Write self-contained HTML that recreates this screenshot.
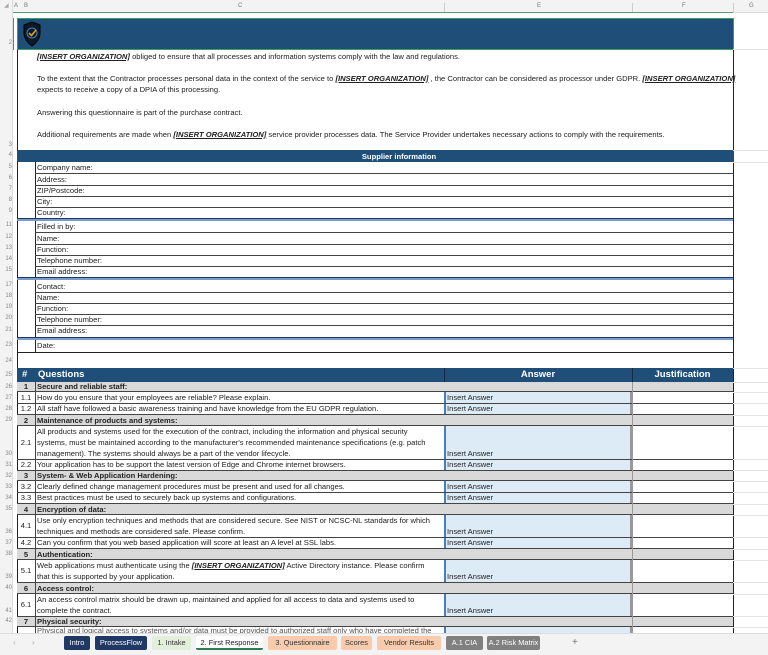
<!DOCTYPE html>
<html><head><meta charset="utf-8"><style>
*{margin:0;padding:0;box-sizing:border-box}
body{width:768px;height:655px;overflow:hidden;background:#fff;font-family:"Liberation Sans",sans-serif;font-size:7.6px;color:#222;position:relative}
.a{position:absolute}
.rn{position:absolute;left:0;width:13px;text-align:right;font-size:6px;color:#888;padding-right:1px}
.g{position:absolute;left:733px;width:35px;height:1px;background:#e4e4e4}
.t{position:absolute;white-space:nowrap;line-height:11px}
.io{font-weight:bold;font-style:italic;text-decoration:underline}
.tab{position:absolute;top:636px;height:14px;line-height:14px;font-size:7.4px;text-align:center;border-radius:2px;white-space:nowrap;overflow:hidden}
</style></head><body>
<div class="a" style="left:0;top:0;width:768px;height:13px;background:#f3f3f3;border-bottom:1px solid #ddd"></div>
<div class="a" style="left:13px;top:0;width:720px;height:13px;border-bottom:1px solid #5a9e72"></div>
<div class="a" style="left:0;top:0;width:13px;height:655px;background:#f3f3f3;border-right:1px solid #ddd"></div>
<div class="t" style="left:4px;top:1px;color:#aaa;font-size:6px">◢</div>
<div class="t" style="left:14px;top:1px;color:#777;font-size:6px">A</div>
<div class="t" style="left:24px;top:1px;color:#777;font-size:6px">B</div>
<div class="t" style="left:238px;top:1px;color:#777;font-size:6px">C</div>
<div class="t" style="left:537px;top:1px;color:#777;font-size:6px">E</div>
<div class="t" style="left:682px;top:1px;color:#777;font-size:6px">F</div>
<div class="t" style="left:749px;top:1px;color:#777;font-size:6px">G</div>
<div class="a" style="left:444px;top:3px;width:1px;height:9px;background:#ccc"></div>
<div class="a" style="left:632px;top:3px;width:1px;height:9px;background:#ccc"></div>
<div class="a" style="left:733px;top:3px;width:1px;height:9px;background:#ccc"></div>

<div class="a" style="left:17px;top:18px;width:717px;height:32px;background:#1f4e79;border:1px solid #3f9a63"></div>
<div class="a" style="left:13px;top:18px;width:1px;height:32px;background:#3f9a63"></div>
<svg class="a" style="left:22px;top:21px" width="20" height="26" viewBox="0 0 20 26"><path d="M10 1 L18 4 L18 12 C18 18 14 22 10 25 C6 22 2 18 2 12 L2 4 Z" fill="#0b1a2b" stroke="#000" stroke-width="1"/><circle cx="10" cy="12" r="5" fill="none" stroke="#5a7fa5" stroke-width="1"/><path d="M7 12 L9.5 14.5 L14 9" fill="none" stroke="#e0a020" stroke-width="1.6"/></svg>
<div class="rn" style="top:40px">2</div>

<div class="a" style="left:17px;top:50px;width:1px;height:585px;background:#222"></div>
<div class="a" style="left:35px;top:150px;width:1px;height:202px;background:#222"></div>
<div class="a" style="left:733px;top:50px;width:1px;height:585px;background:#222"></div>
<div class="t" style="left:37px;top:51px"><span class="io">[INSERT ORGANIZATION]</span> obliged to ensure that all processes and information systems comply with the law and regulations.</div>
<div class="t" style="left:37px;top:73px">To the extent that the Contractor processes personal data in the context of the service to <span class="io">[INSERT ORGANIZATION]</span> , the Contractor can be considered as processor under GDPR. <span class="io">[INSERT ORGANIZATION]</span></div>
<div class="t" style="left:37px;top:84px">expects to receive a copy of a DPIA of this processing.</div>
<div class="t" style="left:37px;top:107px">Answering this questionnaire is part of the purchase contract.</div>
<div class="t" style="left:37px;top:129px">Additional requirements are made when <span class="io">[INSERT ORGANIZATION]</span> service provider processes data. The Service Provider undertakes necessary actions to comply with the requirements.</div>
<div class="rn" style="top:142px">3</div>

<div class="a" style="left:17px;top:150px;width:717px;height:12px;background:#1f4e79"></div>
<div class="t" style="left:0;width:768px;top:151px;text-align:center;color:#fff;font-weight:bold;padding-left:30px">Supplier information</div>
<div class="rn" style="top:152px">4</div>

<div class="a" style="left:35px;top:173px;width:698px;height:1px;background:#444"></div>
<div class="t" style="left:37px;top:162px">Company name:</div><div class="rn" style="top:164px">5</div>
<div class="a" style="left:35px;top:185px;width:698px;height:1px;background:#444"></div>
<div class="t" style="left:37px;top:174px">Address:</div><div class="rn" style="top:175px">6</div>
<div class="a" style="left:35px;top:196px;width:698px;height:1px;background:#444"></div>
<div class="t" style="left:37px;top:185px">ZIP/Postcode:</div><div class="rn" style="top:186px">7</div>
<div class="a" style="left:35px;top:207px;width:698px;height:1px;background:#444"></div>
<div class="t" style="left:37px;top:196px">City:</div><div class="rn" style="top:197px">8</div>
<div class="t" style="left:37px;top:207px">Country:</div><div class="rn" style="top:208px">9</div>
<div class="a" style="left:17px;top:218px;width:716px;height:3px;background:#7a9cc8;border-top:1px solid #1f3864"></div>
<div class="t" style="left:37px;top:221px">Filled in by:</div><div class="rn" style="top:222px">11</div>
<div class="a" style="left:35px;top:232px;width:698px;height:1px;background:#444"></div>
<div class="t" style="left:37px;top:233px">Name:</div><div class="rn" style="top:234px">12</div>
<div class="a" style="left:35px;top:244px;width:698px;height:1px;background:#444"></div>
<div class="t" style="left:37px;top:244px">Function:</div><div class="rn" style="top:245px">13</div>
<div class="a" style="left:35px;top:255px;width:698px;height:1px;background:#444"></div>
<div class="t" style="left:37px;top:255px">Telephone number:</div><div class="rn" style="top:256px">14</div>
<div class="a" style="left:35px;top:266px;width:698px;height:1px;background:#444"></div>
<div class="t" style="left:37px;top:266px">Email address:</div><div class="rn" style="top:267px">15</div>
<div class="a" style="left:17px;top:277px;width:716px;height:3px;background:#7a9cc8;border-top:1px solid #1f3864"></div>
<div class="t" style="left:37px;top:281px">Contact:</div><div class="rn" style="top:282px">17</div>
<div class="a" style="left:35px;top:292px;width:698px;height:1px;background:#444"></div>
<div class="t" style="left:37px;top:292px">Name:</div><div class="rn" style="top:293px">18</div>
<div class="a" style="left:35px;top:303px;width:698px;height:1px;background:#444"></div>
<div class="t" style="left:37px;top:303px">Function:</div><div class="rn" style="top:304px">19</div>
<div class="a" style="left:35px;top:314px;width:698px;height:1px;background:#444"></div>
<div class="t" style="left:37px;top:314px">Telephone number:</div><div class="rn" style="top:315px">20</div>
<div class="a" style="left:35px;top:325px;width:698px;height:1px;background:#444"></div>
<div class="t" style="left:37px;top:325px">Email address:</div><div class="rn" style="top:327px">21</div>
<div class="a" style="left:17px;top:337px;width:716px;height:3px;background:#7a9cc8;border-top:1px solid #1f3864"></div>
<div class="t" style="left:37px;top:340px">Date:</div><div class="rn" style="top:342px">23</div>
<div class="a" style="left:17px;top:352px;width:716px;height:1px;background:#222"></div>
<div class="rn" style="top:358px">24</div>

<div class="a" style="left:17px;top:368px;width:716px;height:14px;background:#1f4e79"></div>
<div class="a" style="left:444px;top:368px;width:1px;height:14px;background:#0d2a45"></div>
<div class="a" style="left:632px;top:368px;width:1px;height:14px;background:#0d2a45"></div>
<div class="t" style="left:22px;top:369px;color:#fff;font-weight:bold;font-size:9.5px;line-height:12px">#</div>
<div class="t" style="left:38px;top:369px;color:#fff;font-weight:bold;font-size:9.5px;line-height:12px">Questions</div>
<div class="t" style="left:444px;width:188px;text-align:center;top:369px;color:#fff;font-weight:bold;font-size:9.5px;line-height:12px">Answer</div>
<div class="t" style="left:632px;width:101px;text-align:center;top:369px;color:#fff;font-weight:bold;font-size:9.5px;line-height:12px">Justification</div>
<div class="rn" style="top:372px">25</div>

<div class="a" style="left:17px;top:382px;width:716px;height:10px;background:#d9d9d9;border-bottom:1px solid #444"></div>
<div class="t" style="left:17px;width:18px;text-align:center;top:381px;font-weight:bold">1</div><div class="t" style="left:37px;top:381px;font-weight:bold">Secure and reliable staff:</div><div class="rn" style="top:384px">26</div>

<div class="a" style="left:444px;top:392px;width:188px;height:23px;background:#ddebf7;border-left:2px solid #4a7ebb;border-right:2px solid #999"></div>
<div class="a" style="left:17px;top:403px;width:716px;height:1px;background:#444"></div>
<div class="a" style="left:17px;top:414px;width:716px;height:1px;background:#444"></div>
<div class="t" style="left:17px;width:18px;text-align:center;top:392px">1.1</div><div class="t" style="left:37px;top:392px">How do you ensure that your employees are reliable? Please explain.</div><div class="t" style="left:447px;top:392px">Insert Answer</div><div class="rn" style="top:395px">27</div>
<div class="t" style="left:17px;width:18px;text-align:center;top:403px">1.2</div><div class="t" style="left:37px;top:403px">All staff have followed a basic awareness training and have knowledge from the EU GDPR regulation.</div><div class="t" style="left:447px;top:403px">Insert Answer</div><div class="rn" style="top:406px">28</div>

<div class="a" style="left:17px;top:415px;width:716px;height:11px;background:#d9d9d9;border-bottom:1px solid #444"></div>
<div class="t" style="left:17px;width:18px;text-align:center;top:415px;font-weight:bold">2</div><div class="t" style="left:37px;top:415px;font-weight:bold">Maintenance of products and systems:</div><div class="rn" style="top:417px">29</div>

<div class="a" style="left:444px;top:426px;width:188px;height:44px;background:#ddebf7;border-left:2px solid #4a7ebb;border-right:2px solid #999"></div>
<div class="a" style="left:17px;top:459px;width:716px;height:1px;background:#444"></div>
<div class="a" style="left:17px;top:470px;width:716px;height:1px;background:#444"></div>
<div class="t" style="left:17px;width:18px;text-align:center;top:437px">2.1</div>
<div class="t" style="left:37px;top:426px">All products and systems used for the execution of the contract, including the information and physical security</div>
<div class="t" style="left:37px;top:437px">systems, must be maintained according to the manufacturer's recommended maintenance specifications (e.g. patch</div>
<div class="t" style="left:37px;top:448px">management). The systems should always be a part of the vendor lifecycle.</div>
<div class="t" style="left:447px;top:448px">Insert Answer</div><div class="rn" style="top:451px">30</div>
<div class="t" style="left:17px;width:18px;text-align:center;top:459px">2.2</div><div class="t" style="left:37px;top:459px">Your application has to be support the latest version of Edge and Chrome internet browsers.</div><div class="t" style="left:447px;top:459px">Insert Answer</div><div class="rn" style="top:462px">31</div>

<div class="a" style="left:17px;top:470px;width:716px;height:11px;background:#d9d9d9;border-bottom:1px solid #444;border-top:1px solid #444"></div>
<div class="t" style="left:17px;width:18px;text-align:center;top:470px;font-weight:bold">3</div><div class="t" style="left:37px;top:470px;font-weight:bold">System- &amp; Web Application Hardening:</div><div class="rn" style="top:473px">32</div>

<div class="a" style="left:444px;top:481px;width:188px;height:23px;background:#ddebf7;border-left:2px solid #4a7ebb;border-right:2px solid #999"></div>
<div class="a" style="left:17px;top:492px;width:716px;height:1px;background:#444"></div>
<div class="a" style="left:17px;top:503px;width:716px;height:1px;background:#444"></div>
<div class="t" style="left:17px;width:18px;text-align:center;top:481px">3.2</div><div class="t" style="left:37px;top:481px">Clearly defined change management procedures must be present and used for all changes.</div><div class="t" style="left:447px;top:481px">Insert Answer</div><div class="rn" style="top:484px">33</div>
<div class="t" style="left:17px;width:18px;text-align:center;top:492px">3.3</div><div class="t" style="left:37px;top:492px">Best practices must be used to securely back up systems and configurations.</div><div class="t" style="left:447px;top:492px">Insert Answer</div><div class="rn" style="top:495px">34</div>

<div class="a" style="left:17px;top:504px;width:716px;height:11px;background:#d9d9d9;border-bottom:1px solid #444"></div>
<div class="t" style="left:17px;width:18px;text-align:center;top:504px;font-weight:bold">4</div><div class="t" style="left:37px;top:504px;font-weight:bold">Encryption of data:</div><div class="rn" style="top:506px">35</div>

<div class="a" style="left:444px;top:515px;width:188px;height:34px;background:#ddebf7;border-left:2px solid #4a7ebb;border-right:2px solid #999"></div>
<div class="a" style="left:17px;top:537px;width:716px;height:1px;background:#444"></div>
<div class="a" style="left:17px;top:548px;width:716px;height:1px;background:#444"></div>
<div class="t" style="left:17px;width:18px;text-align:center;top:520px">4.1</div>
<div class="t" style="left:37px;top:515px">Use only encryption techniques and methods that are considered secure. See NIST or NCSC-NL standards for which</div>
<div class="t" style="left:37px;top:526px">techniques and methods are considered safe. Please confirm.</div>
<div class="t" style="left:447px;top:526px">Insert Answer</div><div class="rn" style="top:529px">36</div>
<div class="t" style="left:17px;width:18px;text-align:center;top:537px">4.2</div><div class="t" style="left:37px;top:537px">Can you confirm that you web based application will score at least an A level at SSL labs.</div><div class="t" style="left:447px;top:537px">Insert Answer</div><div class="rn" style="top:540px">37</div>

<div class="a" style="left:17px;top:549px;width:716px;height:11px;background:#d9d9d9;border-bottom:1px solid #444"></div>
<div class="t" style="left:17px;width:18px;text-align:center;top:549px;font-weight:bold">5</div><div class="t" style="left:37px;top:549px;font-weight:bold">Authentication:</div><div class="rn" style="top:551px">38</div>

<div class="a" style="left:444px;top:560px;width:188px;height:22px;background:#ddebf7;border-left:2px solid #4a7ebb;border-right:2px solid #999"></div>
<div class="a" style="left:17px;top:582px;width:716px;height:1px;background:#444"></div>
<div class="t" style="left:17px;width:18px;text-align:center;top:565px">5.1</div>
<div class="t" style="left:37px;top:560px">Web applications must authenticate using the <span class="io">[INSERT ORGANIZATION]</span> Active Directory instance. Please confirm</div>
<div class="t" style="left:37px;top:571px">that this is supported by your application.</div>
<div class="t" style="left:447px;top:571px">Insert Answer</div><div class="rn" style="top:574px">39</div>

<div class="a" style="left:17px;top:583px;width:716px;height:11px;background:#d9d9d9;border-bottom:1px solid #444"></div>
<div class="t" style="left:17px;width:18px;text-align:center;top:583px;font-weight:bold">6</div><div class="t" style="left:37px;top:583px;font-weight:bold">Access control:</div><div class="rn" style="top:585px">40</div>

<div class="a" style="left:444px;top:594px;width:188px;height:22px;background:#ddebf7;border-left:2px solid #4a7ebb;border-right:2px solid #999"></div>
<div class="a" style="left:17px;top:616px;width:716px;height:1px;background:#444"></div>
<div class="t" style="left:17px;width:18px;text-align:center;top:599px">6.1</div>
<div class="t" style="left:37px;top:594px">An access control matrix should be drawn up, maintained and applied for all access to data and systems used to</div>
<div class="t" style="left:37px;top:605px">complete the contract.</div>
<div class="t" style="left:447px;top:605px">Insert Answer</div><div class="rn" style="top:608px">41</div>

<div class="a" style="left:17px;top:617px;width:716px;height:10px;background:#d9d9d9;border-bottom:1px solid #444"></div>
<div class="t" style="left:17px;width:18px;text-align:center;top:616px;font-weight:bold">7</div><div class="t" style="left:37px;top:616px;font-weight:bold">Physical security:</div><div class="rn" style="top:618px">42</div>
<div class="a" style="left:444px;top:627px;width:188px;height:8px;background:#ddebf7;border-left:2px solid #4a7ebb;border-right:2px solid #999"></div>
<div class="t" style="left:37px;top:625px;color:#555">Physical and logical access to systems and/or data must be provided to authorized staff only who have completed the</div>

<div class="a" style="left:35px;top:382px;width:1px;height:253px;background:#444"></div>
<div class="a" style="left:632px;top:382px;width:1px;height:253px;background:#999"></div>

<div class="g" style="top:49px"></div><div class="g" style="top:150px"></div><div class="g" style="top:162px"></div>
<div class="g" style="top:368px"></div><div class="g" style="top:382px"></div><div class="g" style="top:392px"></div><div class="g" style="top:403px"></div><div class="g" style="top:415px"></div><div class="g" style="top:426px"></div><div class="g" style="top:459px"></div><div class="g" style="top:470px"></div><div class="g" style="top:481px"></div><div class="g" style="top:492px"></div><div class="g" style="top:504px"></div><div class="g" style="top:515px"></div><div class="g" style="top:537px"></div><div class="g" style="top:549px"></div><div class="g" style="top:560px"></div><div class="g" style="top:582px"></div><div class="g" style="top:594px"></div><div class="g" style="top:616px"></div><div class="g" style="top:627px"></div>

<div class="a" style="left:0;top:633px;width:768px;height:22px;background:#f3f3f3;border-top:1px solid #ddd"></div>
<div class="t" style="left:13px;top:637px;color:#aaa;font-size:8px">‹</div>
<div class="t" style="left:32px;top:637px;color:#aaa;font-size:8px">›</div>
<div class="tab" style="left:64px;width:26px;background:#1f3864;color:#fff">Intro</div>
<div class="tab" style="left:95px;width:52px;background:#1f3864;color:#fff">ProcessFlow</div>
<div class="tab" style="left:152px;width:39px;background:#e2efda;color:#333">1. Intake</div>
<div class="tab" style="left:196px;width:67px;background:#fff;color:#222;border-bottom:2px solid #2e7d4f">2. First Response</div>
<div class="tab" style="left:268px;width:69px;background:#f8cbad;color:#333">3. Questionnaire</div>
<div class="tab" style="left:341px;width:31px;background:#f8cbad;color:#333">Scores</div>
<div class="tab" style="left:377px;width:64px;background:#f8cbad;color:#333">Vendor Results</div>
<div class="tab" style="left:446px;width:37px;background:#808080;color:#fff">A.1 CIA</div>
<div class="tab" style="left:487px;width:53px;background:#808080;color:#fff">A.2 Risk Matrix</div>
<div class="t" style="left:572px;top:637px;color:#777;font-size:10px">+</div>
</body></html>
